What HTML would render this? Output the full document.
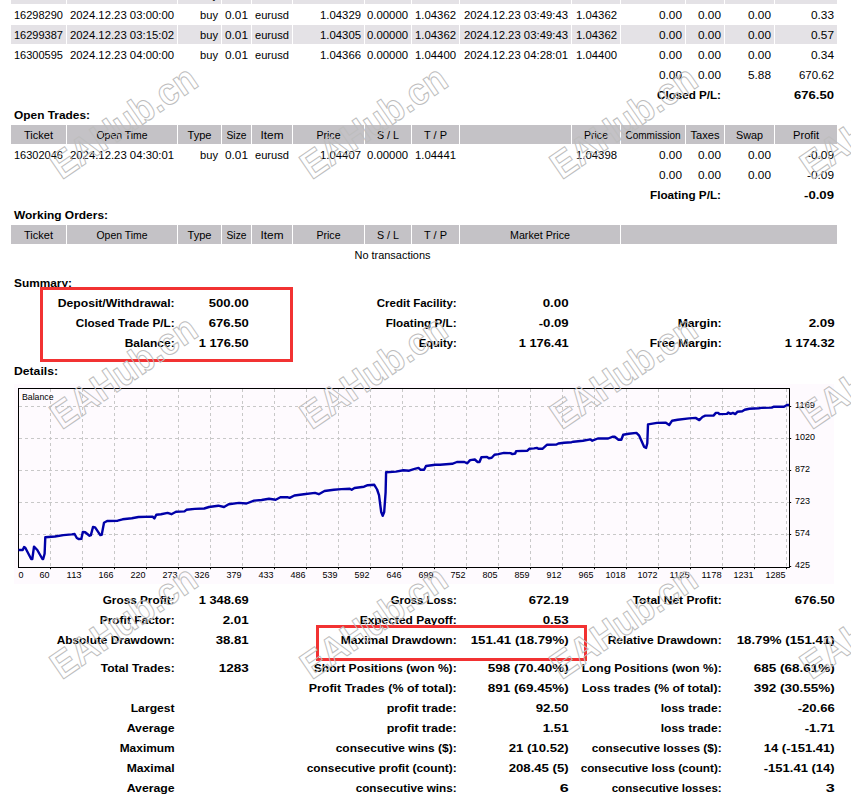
<!DOCTYPE html>
<html><head><meta charset="utf-8"><title>Statement</title>
<style>
html,body{margin:0;padding:0;background:#fff;width:851px;height:798px;overflow:hidden}
svg{display:block}
text{font-family:"Liberation Sans",sans-serif;fill:#000}
.wm{fill:none;stroke:#BDBDBD;stroke-width:1}
</style></head><body>
<svg width="851" height="798" viewBox="0 0 851 798">
<rect x="0" y="0" width="851" height="798" fill="#fff"/>
<rect x="11" y="-15" width="55" height="19" fill="#E4E2E6"/>
<rect x="67" y="-15" width="110" height="19" fill="#E4E2E6"/>
<rect x="178" y="-15" width="43" height="19" fill="#E4E2E6"/>
<rect x="222" y="-15" width="29" height="19" fill="#E4E2E6"/>
<rect x="252" y="-15" width="40" height="19" fill="#E4E2E6"/>
<rect x="293" y="-15" width="71" height="19" fill="#E4E2E6"/>
<rect x="365" y="-15" width="46" height="19" fill="#E4E2E6"/>
<rect x="412" y="-15" width="47" height="19" fill="#E4E2E6"/>
<rect x="460" y="-15" width="111" height="19" fill="#E4E2E6"/>
<rect x="572" y="-15" width="48" height="19" fill="#E4E2E6"/>
<rect x="621" y="-15" width="64" height="19" fill="#E4E2E6"/>
<rect x="686" y="-15" width="38" height="19" fill="#E4E2E6"/>
<rect x="725" y="-15" width="49" height="19" fill="#E4E2E6"/>
<rect x="775" y="-15" width="62" height="19" fill="#E4E2E6"/>
<rect x="11" y="25" width="55" height="19" fill="#E4E2E6"/>
<rect x="67" y="25" width="110" height="19" fill="#E4E2E6"/>
<rect x="178" y="25" width="43" height="19" fill="#E4E2E6"/>
<rect x="222" y="25" width="29" height="19" fill="#E4E2E6"/>
<rect x="252" y="25" width="40" height="19" fill="#E4E2E6"/>
<rect x="293" y="25" width="71" height="19" fill="#E4E2E6"/>
<rect x="365" y="25" width="46" height="19" fill="#E4E2E6"/>
<rect x="412" y="25" width="47" height="19" fill="#E4E2E6"/>
<rect x="460" y="25" width="111" height="19" fill="#E4E2E6"/>
<rect x="572" y="25" width="48" height="19" fill="#E4E2E6"/>
<rect x="621" y="25" width="64" height="19" fill="#E4E2E6"/>
<rect x="686" y="25" width="38" height="19" fill="#E4E2E6"/>
<rect x="725" y="25" width="49" height="19" fill="#E4E2E6"/>
<rect x="775" y="25" width="62" height="19" fill="#E4E2E6"/>
<rect x="11" y="125" width="55" height="19" fill="#C4C2C6"/>
<rect x="67" y="125" width="110" height="19" fill="#C4C2C6"/>
<rect x="178" y="125" width="43" height="19" fill="#C4C2C6"/>
<rect x="222" y="125" width="29" height="19" fill="#C4C2C6"/>
<rect x="252" y="125" width="40" height="19" fill="#C4C2C6"/>
<rect x="293" y="125" width="71" height="19" fill="#C4C2C6"/>
<rect x="365" y="125" width="46" height="19" fill="#C4C2C6"/>
<rect x="412" y="125" width="47" height="19" fill="#C4C2C6"/>
<rect x="460" y="125" width="111" height="19" fill="#C4C2C6"/>
<rect x="572" y="125" width="48" height="19" fill="#C4C2C6"/>
<rect x="621" y="125" width="64" height="19" fill="#C4C2C6"/>
<rect x="686" y="125" width="38" height="19" fill="#C4C2C6"/>
<rect x="725" y="125" width="49" height="19" fill="#C4C2C6"/>
<rect x="775" y="125" width="62" height="19" fill="#C4C2C6"/>
<rect x="11" y="225" width="55" height="19" fill="#C4C2C6"/>
<rect x="67" y="225" width="110" height="19" fill="#C4C2C6"/>
<rect x="178" y="225" width="43" height="19" fill="#C4C2C6"/>
<rect x="222" y="225" width="29" height="19" fill="#C4C2C6"/>
<rect x="252" y="225" width="40" height="19" fill="#C4C2C6"/>
<rect x="293" y="225" width="71" height="19" fill="#C4C2C6"/>
<rect x="365" y="225" width="46" height="19" fill="#C4C2C6"/>
<rect x="412" y="225" width="47" height="19" fill="#C4C2C6"/>
<rect x="460" y="225" width="160" height="19" fill="#C4C2C6"/>
<rect x="621" y="225" width="216" height="19" fill="#C4C2C6"/>
<text x="218" y="-1" text-anchor="end" font-size="11" textLength="18" lengthAdjust="spacingAndGlyphs">buy</text>
<text x="63" y="19" text-anchor="end" font-size="11" textLength="49" lengthAdjust="spacingAndGlyphs">16298290</text>
<text x="174" y="19" text-anchor="end" font-size="11" textLength="104" lengthAdjust="spacingAndGlyphs">2024.12.23 03:00:00</text>
<text x="218" y="19" text-anchor="end" font-size="11" textLength="18" lengthAdjust="spacingAndGlyphs">buy</text>
<text x="248" y="19" text-anchor="end" font-size="11" textLength="23" lengthAdjust="spacingAndGlyphs">0.01</text>
<text x="289" y="19" text-anchor="end" font-size="11" textLength="34" lengthAdjust="spacingAndGlyphs">eurusd</text>
<text x="361" y="19" text-anchor="end" font-size="11" textLength="41" lengthAdjust="spacingAndGlyphs">1.04329</text>
<text x="408" y="19" text-anchor="end" font-size="11" textLength="41" lengthAdjust="spacingAndGlyphs">0.00000</text>
<text x="456" y="19" text-anchor="end" font-size="11" textLength="41" lengthAdjust="spacingAndGlyphs">1.04362</text>
<text x="568" y="19" text-anchor="end" font-size="11" textLength="104" lengthAdjust="spacingAndGlyphs">2024.12.23 03:49:43</text>
<text x="617" y="19" text-anchor="end" font-size="11" textLength="41" lengthAdjust="spacingAndGlyphs">1.04362</text>
<text x="682" y="19" text-anchor="end" font-size="11" textLength="23" lengthAdjust="spacingAndGlyphs">0.00</text>
<text x="721" y="19" text-anchor="end" font-size="11" textLength="23" lengthAdjust="spacingAndGlyphs">0.00</text>
<text x="771" y="19" text-anchor="end" font-size="11" textLength="23" lengthAdjust="spacingAndGlyphs">0.00</text>
<text x="834" y="19" text-anchor="end" font-size="11" textLength="23" lengthAdjust="spacingAndGlyphs">0.33</text>
<text x="63" y="39" text-anchor="end" font-size="11" textLength="49" lengthAdjust="spacingAndGlyphs">16299387</text>
<text x="174" y="39" text-anchor="end" font-size="11" textLength="104" lengthAdjust="spacingAndGlyphs">2024.12.23 03:15:02</text>
<text x="218" y="39" text-anchor="end" font-size="11" textLength="18" lengthAdjust="spacingAndGlyphs">buy</text>
<text x="248" y="39" text-anchor="end" font-size="11" textLength="23" lengthAdjust="spacingAndGlyphs">0.01</text>
<text x="289" y="39" text-anchor="end" font-size="11" textLength="34" lengthAdjust="spacingAndGlyphs">eurusd</text>
<text x="361" y="39" text-anchor="end" font-size="11" textLength="41" lengthAdjust="spacingAndGlyphs">1.04305</text>
<text x="408" y="39" text-anchor="end" font-size="11" textLength="41" lengthAdjust="spacingAndGlyphs">0.00000</text>
<text x="456" y="39" text-anchor="end" font-size="11" textLength="41" lengthAdjust="spacingAndGlyphs">1.04362</text>
<text x="568" y="39" text-anchor="end" font-size="11" textLength="104" lengthAdjust="spacingAndGlyphs">2024.12.23 03:49:43</text>
<text x="617" y="39" text-anchor="end" font-size="11" textLength="41" lengthAdjust="spacingAndGlyphs">1.04362</text>
<text x="682" y="39" text-anchor="end" font-size="11" textLength="23" lengthAdjust="spacingAndGlyphs">0.00</text>
<text x="721" y="39" text-anchor="end" font-size="11" textLength="23" lengthAdjust="spacingAndGlyphs">0.00</text>
<text x="771" y="39" text-anchor="end" font-size="11" textLength="23" lengthAdjust="spacingAndGlyphs">0.00</text>
<text x="834" y="39" text-anchor="end" font-size="11" textLength="23" lengthAdjust="spacingAndGlyphs">0.57</text>
<text x="63" y="59" text-anchor="end" font-size="11" textLength="49" lengthAdjust="spacingAndGlyphs">16300595</text>
<text x="174" y="59" text-anchor="end" font-size="11" textLength="104" lengthAdjust="spacingAndGlyphs">2024.12.23 04:00:00</text>
<text x="218" y="59" text-anchor="end" font-size="11" textLength="18" lengthAdjust="spacingAndGlyphs">buy</text>
<text x="248" y="59" text-anchor="end" font-size="11" textLength="23" lengthAdjust="spacingAndGlyphs">0.01</text>
<text x="289" y="59" text-anchor="end" font-size="11" textLength="34" lengthAdjust="spacingAndGlyphs">eurusd</text>
<text x="361" y="59" text-anchor="end" font-size="11" textLength="41" lengthAdjust="spacingAndGlyphs">1.04366</text>
<text x="408" y="59" text-anchor="end" font-size="11" textLength="41" lengthAdjust="spacingAndGlyphs">0.00000</text>
<text x="456" y="59" text-anchor="end" font-size="11" textLength="41" lengthAdjust="spacingAndGlyphs">1.04400</text>
<text x="568" y="59" text-anchor="end" font-size="11" textLength="104" lengthAdjust="spacingAndGlyphs">2024.12.23 04:28:01</text>
<text x="617" y="59" text-anchor="end" font-size="11" textLength="41" lengthAdjust="spacingAndGlyphs">1.04400</text>
<text x="682" y="59" text-anchor="end" font-size="11" textLength="23" lengthAdjust="spacingAndGlyphs">0.00</text>
<text x="721" y="59" text-anchor="end" font-size="11" textLength="23" lengthAdjust="spacingAndGlyphs">0.00</text>
<text x="771" y="59" text-anchor="end" font-size="11" textLength="23" lengthAdjust="spacingAndGlyphs">0.00</text>
<text x="834" y="59" text-anchor="end" font-size="11" textLength="23" lengthAdjust="spacingAndGlyphs">0.34</text>
<text x="682" y="79" text-anchor="end" font-size="11" textLength="23" lengthAdjust="spacingAndGlyphs">0.00</text>
<text x="721" y="79" text-anchor="end" font-size="11" textLength="23" lengthAdjust="spacingAndGlyphs">0.00</text>
<text x="771" y="79" text-anchor="end" font-size="11" textLength="23" lengthAdjust="spacingAndGlyphs">5.88</text>
<text x="834" y="79" text-anchor="end" font-size="11" textLength="35" lengthAdjust="spacingAndGlyphs">670.62</text>
<text x="721" y="99" text-anchor="end" font-weight="bold" font-size="11" textLength="64" lengthAdjust="spacingAndGlyphs">Closed P/L:</text>
<text x="834" y="99" text-anchor="end" font-weight="bold" font-size="11" textLength="40" lengthAdjust="spacingAndGlyphs">676.50</text>
<text x="14" y="119" text-anchor="start" font-weight="bold" font-size="11" textLength="76" lengthAdjust="spacingAndGlyphs">Open Trades:</text>
<text x="38.5" y="139" text-anchor="middle" font-size="11" textLength="29" lengthAdjust="spacingAndGlyphs">Ticket</text>
<text x="122.0" y="139" text-anchor="middle" font-size="11" textLength="51" lengthAdjust="spacingAndGlyphs">Open Time</text>
<text x="199.5" y="139" text-anchor="middle" font-size="11" textLength="24" lengthAdjust="spacingAndGlyphs">Type</text>
<text x="236.5" y="139" text-anchor="middle" font-size="11" textLength="20" lengthAdjust="spacingAndGlyphs">Size</text>
<text x="272.0" y="139" text-anchor="middle" font-size="11" textLength="23" lengthAdjust="spacingAndGlyphs">Item</text>
<text x="328.5" y="139" text-anchor="middle" font-size="11" textLength="24" lengthAdjust="spacingAndGlyphs">Price</text>
<text x="388.0" y="139" text-anchor="middle" font-size="11" textLength="22" lengthAdjust="spacingAndGlyphs">S / L</text>
<text x="435.5" y="139" text-anchor="middle" font-size="11" textLength="23" lengthAdjust="spacingAndGlyphs">T / P</text>
<text x="596.0" y="139" text-anchor="middle" font-size="11" textLength="24" lengthAdjust="spacingAndGlyphs">Price</text>
<text x="653.0" y="139" text-anchor="middle" font-size="11" textLength="55" lengthAdjust="spacingAndGlyphs">Commission</text>
<text x="705.0" y="139" text-anchor="middle" font-size="11" textLength="29" lengthAdjust="spacingAndGlyphs">Taxes</text>
<text x="749.5" y="139" text-anchor="middle" font-size="11" textLength="27" lengthAdjust="spacingAndGlyphs">Swap</text>
<text x="806.0" y="139" text-anchor="middle" font-size="11" textLength="26" lengthAdjust="spacingAndGlyphs">Profit</text>
<text x="63" y="159" text-anchor="end" font-size="11" textLength="49" lengthAdjust="spacingAndGlyphs">16302046</text>
<text x="174" y="159" text-anchor="end" font-size="11" textLength="104" lengthAdjust="spacingAndGlyphs">2024.12.23 04:30:01</text>
<text x="218" y="159" text-anchor="end" font-size="11" textLength="18" lengthAdjust="spacingAndGlyphs">buy</text>
<text x="248" y="159" text-anchor="end" font-size="11" textLength="23" lengthAdjust="spacingAndGlyphs">0.01</text>
<text x="289" y="159" text-anchor="end" font-size="11" textLength="34" lengthAdjust="spacingAndGlyphs">eurusd</text>
<text x="361" y="159" text-anchor="end" font-size="11" textLength="41" lengthAdjust="spacingAndGlyphs">1.04407</text>
<text x="408" y="159" text-anchor="end" font-size="11" textLength="41" lengthAdjust="spacingAndGlyphs">0.00000</text>
<text x="456" y="159" text-anchor="end" font-size="11" textLength="41" lengthAdjust="spacingAndGlyphs">1.04441</text>
<text x="617" y="159" text-anchor="end" font-size="11" textLength="41" lengthAdjust="spacingAndGlyphs">1.04398</text>
<text x="682" y="159" text-anchor="end" font-size="11" textLength="23" lengthAdjust="spacingAndGlyphs">0.00</text>
<text x="721" y="159" text-anchor="end" font-size="11" textLength="23" lengthAdjust="spacingAndGlyphs">0.00</text>
<text x="771" y="159" text-anchor="end" font-size="11" textLength="23" lengthAdjust="spacingAndGlyphs">0.00</text>
<text x="834" y="159" text-anchor="end" font-size="11" textLength="27" lengthAdjust="spacingAndGlyphs">-0.09</text>
<text x="682" y="179" text-anchor="end" font-size="11" textLength="23" lengthAdjust="spacingAndGlyphs">0.00</text>
<text x="721" y="179" text-anchor="end" font-size="11" textLength="23" lengthAdjust="spacingAndGlyphs">0.00</text>
<text x="771" y="179" text-anchor="end" font-size="11" textLength="23" lengthAdjust="spacingAndGlyphs">0.00</text>
<text x="834" y="179" text-anchor="end" font-size="11" textLength="27" lengthAdjust="spacingAndGlyphs">-0.09</text>
<text x="721" y="199" text-anchor="end" font-weight="bold" font-size="11" textLength="71" lengthAdjust="spacingAndGlyphs">Floating P/L:</text>
<text x="834" y="199" text-anchor="end" font-weight="bold" font-size="11" textLength="30" lengthAdjust="spacingAndGlyphs">-0.09</text>
<text x="14" y="219" text-anchor="start" font-weight="bold" font-size="11" textLength="94" lengthAdjust="spacingAndGlyphs">Working Orders:</text>
<text x="38.5" y="239" text-anchor="middle" font-size="11" textLength="29" lengthAdjust="spacingAndGlyphs">Ticket</text>
<text x="122.0" y="239" text-anchor="middle" font-size="11" textLength="51" lengthAdjust="spacingAndGlyphs">Open Time</text>
<text x="199.5" y="239" text-anchor="middle" font-size="11" textLength="24" lengthAdjust="spacingAndGlyphs">Type</text>
<text x="236.5" y="239" text-anchor="middle" font-size="11" textLength="20" lengthAdjust="spacingAndGlyphs">Size</text>
<text x="272.0" y="239" text-anchor="middle" font-size="11" textLength="23" lengthAdjust="spacingAndGlyphs">Item</text>
<text x="328.5" y="239" text-anchor="middle" font-size="11" textLength="24" lengthAdjust="spacingAndGlyphs">Price</text>
<text x="388.0" y="239" text-anchor="middle" font-size="11" textLength="22" lengthAdjust="spacingAndGlyphs">S / L</text>
<text x="435.5" y="239" text-anchor="middle" font-size="11" textLength="23" lengthAdjust="spacingAndGlyphs">T / P</text>
<text x="540" y="239" text-anchor="middle" font-size="11" textLength="60" lengthAdjust="spacingAndGlyphs">Market Price</text>
<text x="392.5" y="259" text-anchor="middle" font-size="11" textLength="76" lengthAdjust="spacingAndGlyphs">No transactions</text>
<text x="14" y="287" text-anchor="start" font-weight="bold" font-size="11" textLength="58" lengthAdjust="spacingAndGlyphs">Summary:</text>
<text x="174.7" y="307" text-anchor="end" font-weight="bold" font-size="11" textLength="117" lengthAdjust="spacingAndGlyphs">Deposit/Withdrawal:</text>
<text x="248.7" y="307" text-anchor="end" font-weight="bold" font-size="11" textLength="40" lengthAdjust="spacingAndGlyphs">500.00</text>
<text x="456.7" y="307" text-anchor="end" font-weight="bold" font-size="11" textLength="80" lengthAdjust="spacingAndGlyphs">Credit Facility:</text>
<text x="568.7" y="307" text-anchor="end" font-weight="bold" font-size="11" textLength="26" lengthAdjust="spacingAndGlyphs">0.00</text>
<text x="174.7" y="327" text-anchor="end" font-weight="bold" font-size="11" textLength="99" lengthAdjust="spacingAndGlyphs">Closed Trade P/L:</text>
<text x="248.7" y="327" text-anchor="end" font-weight="bold" font-size="11" textLength="40" lengthAdjust="spacingAndGlyphs">676.50</text>
<text x="456.7" y="327" text-anchor="end" font-weight="bold" font-size="11" textLength="71" lengthAdjust="spacingAndGlyphs">Floating P/L:</text>
<text x="568.7" y="327" text-anchor="end" font-weight="bold" font-size="11" textLength="30" lengthAdjust="spacingAndGlyphs">-0.09</text>
<text x="721.7" y="327" text-anchor="end" font-weight="bold" font-size="11" textLength="44" lengthAdjust="spacingAndGlyphs">Margin:</text>
<text x="834.7" y="327" text-anchor="end" font-weight="bold" font-size="11" textLength="26" lengthAdjust="spacingAndGlyphs">2.09</text>
<text x="174.7" y="347" text-anchor="end" font-weight="bold" font-size="11" textLength="50" lengthAdjust="spacingAndGlyphs">Balance:</text>
<text x="248.7" y="347" text-anchor="end" font-weight="bold" font-size="11" textLength="50" lengthAdjust="spacingAndGlyphs">1 176.50</text>
<text x="456.7" y="347" text-anchor="end" font-weight="bold" font-size="11" textLength="38" lengthAdjust="spacingAndGlyphs">Equity:</text>
<text x="568.7" y="347" text-anchor="end" font-weight="bold" font-size="11" textLength="50" lengthAdjust="spacingAndGlyphs">1 176.41</text>
<text x="721.7" y="347" text-anchor="end" font-weight="bold" font-size="11" textLength="72" lengthAdjust="spacingAndGlyphs">Free Margin:</text>
<text x="834.7" y="347" text-anchor="end" font-weight="bold" font-size="11" textLength="50" lengthAdjust="spacingAndGlyphs">1 174.32</text>
<text x="14" y="375" text-anchor="start" font-weight="bold" font-size="11" textLength="44" lengthAdjust="spacingAndGlyphs">Details:</text>
<text x="174.7" y="604" text-anchor="end" font-weight="bold" font-size="11" textLength="72" lengthAdjust="spacingAndGlyphs">Gross Profit:</text>
<text x="248.7" y="604" text-anchor="end" font-weight="bold" font-size="11" textLength="50" lengthAdjust="spacingAndGlyphs">1 348.69</text>
<text x="456.7" y="604" text-anchor="end" font-weight="bold" font-size="11" textLength="66" lengthAdjust="spacingAndGlyphs">Gross Loss:</text>
<text x="568.7" y="604" text-anchor="end" font-weight="bold" font-size="11" textLength="40" lengthAdjust="spacingAndGlyphs">672.19</text>
<text x="721.7" y="604" text-anchor="end" font-weight="bold" font-size="11" textLength="89" lengthAdjust="spacingAndGlyphs">Total Net Profit:</text>
<text x="834.7" y="604" text-anchor="end" font-weight="bold" font-size="11" textLength="40" lengthAdjust="spacingAndGlyphs">676.50</text>
<text x="174.7" y="624" text-anchor="end" font-weight="bold" font-size="11" textLength="75" lengthAdjust="spacingAndGlyphs">Profit Factor:</text>
<text x="248.7" y="624" text-anchor="end" font-weight="bold" font-size="11" textLength="26" lengthAdjust="spacingAndGlyphs">2.01</text>
<text x="456.7" y="624" text-anchor="end" font-weight="bold" font-size="11" textLength="97" lengthAdjust="spacingAndGlyphs">Expected Payoff:</text>
<text x="568.7" y="624" text-anchor="end" font-weight="bold" font-size="11" textLength="26" lengthAdjust="spacingAndGlyphs">0.53</text>
<text x="174.7" y="644" text-anchor="end" font-weight="bold" font-size="11" textLength="118" lengthAdjust="spacingAndGlyphs">Absolute Drawdown:</text>
<text x="248.7" y="644" text-anchor="end" font-weight="bold" font-size="11" textLength="33" lengthAdjust="spacingAndGlyphs">38.81</text>
<text x="456.7" y="644" text-anchor="end" font-weight="bold" font-size="11" textLength="116" lengthAdjust="spacingAndGlyphs">Maximal Drawdown:</text>
<text x="568.7" y="644" text-anchor="end" font-weight="bold" font-size="11" textLength="98" lengthAdjust="spacingAndGlyphs">151.41 (18.79%)</text>
<text x="721.7" y="644" text-anchor="end" font-weight="bold" font-size="11" textLength="114" lengthAdjust="spacingAndGlyphs">Relative Drawdown:</text>
<text x="834.7" y="644" text-anchor="end" font-weight="bold" font-size="11" textLength="98" lengthAdjust="spacingAndGlyphs">18.79% (151.41)</text>
<text x="174.7" y="672" text-anchor="end" font-weight="bold" font-size="11" textLength="74" lengthAdjust="spacingAndGlyphs">Total Trades:</text>
<text x="248.7" y="672" text-anchor="end" font-weight="bold" font-size="11" textLength="30" lengthAdjust="spacingAndGlyphs">1283</text>
<text x="456.7" y="672" text-anchor="end" font-weight="bold" font-size="11" textLength="143" lengthAdjust="spacingAndGlyphs">Short Positions (won %):</text>
<text x="568.7" y="672" text-anchor="end" font-weight="bold" font-size="11" textLength="81" lengthAdjust="spacingAndGlyphs">598 (70.40%)</text>
<text x="721.7" y="672" text-anchor="end" font-weight="bold" font-size="11" textLength="140" lengthAdjust="spacingAndGlyphs">Long Positions (won %):</text>
<text x="834.7" y="672" text-anchor="end" font-weight="bold" font-size="11" textLength="81" lengthAdjust="spacingAndGlyphs">685 (68.61%)</text>
<text x="456.7" y="692" text-anchor="end" font-weight="bold" font-size="11" textLength="148" lengthAdjust="spacingAndGlyphs">Profit Trades (% of total):</text>
<text x="568.7" y="692" text-anchor="end" font-weight="bold" font-size="11" textLength="81" lengthAdjust="spacingAndGlyphs">891 (69.45%)</text>
<text x="721.7" y="692" text-anchor="end" font-weight="bold" font-size="11" textLength="140" lengthAdjust="spacingAndGlyphs">Loss trades (% of total):</text>
<text x="834.7" y="692" text-anchor="end" font-weight="bold" font-size="11" textLength="81" lengthAdjust="spacingAndGlyphs">392 (30.55%)</text>
<text x="174.7" y="712" text-anchor="end" font-weight="bold" font-size="11" textLength="44" lengthAdjust="spacingAndGlyphs">Largest</text>
<text x="456.7" y="712" text-anchor="end" font-weight="bold" font-size="11" textLength="70" lengthAdjust="spacingAndGlyphs">profit trade:</text>
<text x="568.7" y="712" text-anchor="end" font-weight="bold" font-size="11" textLength="33" lengthAdjust="spacingAndGlyphs">92.50</text>
<text x="721.7" y="712" text-anchor="end" font-weight="bold" font-size="11" textLength="61" lengthAdjust="spacingAndGlyphs">loss trade:</text>
<text x="834.7" y="712" text-anchor="end" font-weight="bold" font-size="11" textLength="37" lengthAdjust="spacingAndGlyphs">-20.66</text>
<text x="174.7" y="732" text-anchor="end" font-weight="bold" font-size="11" textLength="48" lengthAdjust="spacingAndGlyphs">Average</text>
<text x="456.7" y="732" text-anchor="end" font-weight="bold" font-size="11" textLength="70" lengthAdjust="spacingAndGlyphs">profit trade:</text>
<text x="568.7" y="732" text-anchor="end" font-weight="bold" font-size="11" textLength="26" lengthAdjust="spacingAndGlyphs">1.51</text>
<text x="721.7" y="732" text-anchor="end" font-weight="bold" font-size="11" textLength="61" lengthAdjust="spacingAndGlyphs">loss trade:</text>
<text x="834.7" y="732" text-anchor="end" font-weight="bold" font-size="11" textLength="30" lengthAdjust="spacingAndGlyphs">-1.71</text>
<text x="174.7" y="752" text-anchor="end" font-weight="bold" font-size="11" textLength="55" lengthAdjust="spacingAndGlyphs">Maximum</text>
<text x="456.7" y="752" text-anchor="end" font-weight="bold" font-size="11" textLength="121" lengthAdjust="spacingAndGlyphs">consecutive wins ($):</text>
<text x="568.7" y="752" text-anchor="end" font-weight="bold" font-size="11" textLength="60" lengthAdjust="spacingAndGlyphs">21 (10.52)</text>
<text x="721.7" y="752" text-anchor="end" font-weight="bold" font-size="11" textLength="130" lengthAdjust="spacingAndGlyphs">consecutive losses ($):</text>
<text x="834.7" y="752" text-anchor="end" font-weight="bold" font-size="11" textLength="71" lengthAdjust="spacingAndGlyphs">14 (-151.41)</text>
<text x="174.7" y="772" text-anchor="end" font-weight="bold" font-size="11" textLength="48" lengthAdjust="spacingAndGlyphs">Maximal</text>
<text x="456.7" y="772" text-anchor="end" font-weight="bold" font-size="11" textLength="150" lengthAdjust="spacingAndGlyphs">consecutive profit (count):</text>
<text x="568.7" y="772" text-anchor="end" font-weight="bold" font-size="11" textLength="60" lengthAdjust="spacingAndGlyphs">208.45 (5)</text>
<text x="721.7" y="772" text-anchor="end" font-weight="bold" font-size="11" textLength="141" lengthAdjust="spacingAndGlyphs">consecutive loss (count):</text>
<text x="834.7" y="772" text-anchor="end" font-weight="bold" font-size="11" textLength="71" lengthAdjust="spacingAndGlyphs">-151.41 (14)</text>
<text x="174.7" y="792" text-anchor="end" font-weight="bold" font-size="11" textLength="48" lengthAdjust="spacingAndGlyphs">Average</text>
<text x="456.7" y="792" text-anchor="end" font-weight="bold" font-size="11" textLength="101" lengthAdjust="spacingAndGlyphs">consecutive wins:</text>
<text x="568.7" y="792" text-anchor="end" font-weight="bold" font-size="11" textLength="9" lengthAdjust="spacingAndGlyphs">6</text>
<text x="721.7" y="792" text-anchor="end" font-weight="bold" font-size="11" textLength="110" lengthAdjust="spacingAndGlyphs">consecutive losses:</text>
<text x="834.7" y="792" text-anchor="end" font-weight="bold" font-size="11" textLength="9" lengthAdjust="spacingAndGlyphs">3</text>
<rect x="41.5" y="288.5" width="250" height="72" fill="none" stroke="#F23232" stroke-width="3"/>
<rect x="317.5" y="626.5" width="268" height="33" fill="none" stroke="#F23232" stroke-width="3"/>
<rect x="14" y="384" width="820" height="200" fill="#FEFAFE"/>
<line x1="50.5" y1="389" x2="50.5" y2="567" stroke="#C8C8C8" stroke-width="1" stroke-dasharray="3 3"/>
<line x1="82.5" y1="389" x2="82.5" y2="567" stroke="#C8C8C8" stroke-width="1" stroke-dasharray="3 3"/>
<line x1="114.5" y1="389" x2="114.5" y2="567" stroke="#C8C8C8" stroke-width="1" stroke-dasharray="3 3"/>
<line x1="146.5" y1="389" x2="146.5" y2="567" stroke="#C8C8C8" stroke-width="1" stroke-dasharray="3 3"/>
<line x1="178.5" y1="389" x2="178.5" y2="567" stroke="#C8C8C8" stroke-width="1" stroke-dasharray="3 3"/>
<line x1="210.5" y1="389" x2="210.5" y2="567" stroke="#C8C8C8" stroke-width="1" stroke-dasharray="3 3"/>
<line x1="242.5" y1="389" x2="242.5" y2="567" stroke="#C8C8C8" stroke-width="1" stroke-dasharray="3 3"/>
<line x1="274.5" y1="389" x2="274.5" y2="567" stroke="#C8C8C8" stroke-width="1" stroke-dasharray="3 3"/>
<line x1="306.5" y1="389" x2="306.5" y2="567" stroke="#C8C8C8" stroke-width="1" stroke-dasharray="3 3"/>
<line x1="338.5" y1="389" x2="338.5" y2="567" stroke="#C8C8C8" stroke-width="1" stroke-dasharray="3 3"/>
<line x1="370.5" y1="389" x2="370.5" y2="567" stroke="#C8C8C8" stroke-width="1" stroke-dasharray="3 3"/>
<line x1="402.5" y1="389" x2="402.5" y2="567" stroke="#C8C8C8" stroke-width="1" stroke-dasharray="3 3"/>
<line x1="434.5" y1="389" x2="434.5" y2="567" stroke="#C8C8C8" stroke-width="1" stroke-dasharray="3 3"/>
<line x1="466.5" y1="389" x2="466.5" y2="567" stroke="#C8C8C8" stroke-width="1" stroke-dasharray="3 3"/>
<line x1="498.5" y1="389" x2="498.5" y2="567" stroke="#C8C8C8" stroke-width="1" stroke-dasharray="3 3"/>
<line x1="530.5" y1="389" x2="530.5" y2="567" stroke="#C8C8C8" stroke-width="1" stroke-dasharray="3 3"/>
<line x1="562.5" y1="389" x2="562.5" y2="567" stroke="#C8C8C8" stroke-width="1" stroke-dasharray="3 3"/>
<line x1="594.5" y1="389" x2="594.5" y2="567" stroke="#C8C8C8" stroke-width="1" stroke-dasharray="3 3"/>
<line x1="626.5" y1="389" x2="626.5" y2="567" stroke="#C8C8C8" stroke-width="1" stroke-dasharray="3 3"/>
<line x1="658.5" y1="389" x2="658.5" y2="567" stroke="#C8C8C8" stroke-width="1" stroke-dasharray="3 3"/>
<line x1="690.5" y1="389" x2="690.5" y2="567" stroke="#C8C8C8" stroke-width="1" stroke-dasharray="3 3"/>
<line x1="722.5" y1="389" x2="722.5" y2="567" stroke="#C8C8C8" stroke-width="1" stroke-dasharray="3 3"/>
<line x1="754.5" y1="389" x2="754.5" y2="567" stroke="#C8C8C8" stroke-width="1" stroke-dasharray="3 3"/>
<line x1="786.5" y1="389" x2="786.5" y2="567" stroke="#C8C8C8" stroke-width="1" stroke-dasharray="3 3"/>
<line x1="19" y1="406.5" x2="789" y2="406.5" stroke="#C8C8C8" stroke-width="1" stroke-dasharray="3 3"/>
<line x1="19" y1="438.5" x2="789" y2="438.5" stroke="#C8C8C8" stroke-width="1" stroke-dasharray="3 3"/>
<line x1="19" y1="470.5" x2="789" y2="470.5" stroke="#C8C8C8" stroke-width="1" stroke-dasharray="3 3"/>
<line x1="19" y1="502.5" x2="789" y2="502.5" stroke="#C8C8C8" stroke-width="1" stroke-dasharray="3 3"/>
<line x1="19" y1="534.5" x2="789" y2="534.5" stroke="#C8C8C8" stroke-width="1" stroke-dasharray="3 3"/>
<rect x="18.5" y="388.5" width="771" height="179" fill="none" stroke="#000" stroke-width="1"/>
<line x1="50.5" y1="568" x2="50.5" y2="569.2" stroke="#000" stroke-width="1"/>
<line x1="82.5" y1="568" x2="82.5" y2="569.2" stroke="#000" stroke-width="1"/>
<line x1="114.5" y1="568" x2="114.5" y2="569.2" stroke="#000" stroke-width="1"/>
<line x1="146.5" y1="568" x2="146.5" y2="569.2" stroke="#000" stroke-width="1"/>
<line x1="178.5" y1="568" x2="178.5" y2="569.2" stroke="#000" stroke-width="1"/>
<line x1="210.5" y1="568" x2="210.5" y2="569.2" stroke="#000" stroke-width="1"/>
<line x1="242.5" y1="568" x2="242.5" y2="569.2" stroke="#000" stroke-width="1"/>
<line x1="274.5" y1="568" x2="274.5" y2="569.2" stroke="#000" stroke-width="1"/>
<line x1="306.5" y1="568" x2="306.5" y2="569.2" stroke="#000" stroke-width="1"/>
<line x1="338.5" y1="568" x2="338.5" y2="569.2" stroke="#000" stroke-width="1"/>
<line x1="370.5" y1="568" x2="370.5" y2="569.2" stroke="#000" stroke-width="1"/>
<line x1="402.5" y1="568" x2="402.5" y2="569.2" stroke="#000" stroke-width="1"/>
<line x1="434.5" y1="568" x2="434.5" y2="569.2" stroke="#000" stroke-width="1"/>
<line x1="466.5" y1="568" x2="466.5" y2="569.2" stroke="#000" stroke-width="1"/>
<line x1="498.5" y1="568" x2="498.5" y2="569.2" stroke="#000" stroke-width="1"/>
<line x1="530.5" y1="568" x2="530.5" y2="569.2" stroke="#000" stroke-width="1"/>
<line x1="562.5" y1="568" x2="562.5" y2="569.2" stroke="#000" stroke-width="1"/>
<line x1="594.5" y1="568" x2="594.5" y2="569.2" stroke="#000" stroke-width="1"/>
<line x1="626.5" y1="568" x2="626.5" y2="569.2" stroke="#000" stroke-width="1"/>
<line x1="658.5" y1="568" x2="658.5" y2="569.2" stroke="#000" stroke-width="1"/>
<line x1="690.5" y1="568" x2="690.5" y2="569.2" stroke="#000" stroke-width="1"/>
<line x1="722.5" y1="568" x2="722.5" y2="569.2" stroke="#000" stroke-width="1"/>
<line x1="754.5" y1="568" x2="754.5" y2="569.2" stroke="#000" stroke-width="1"/>
<line x1="786.5" y1="568" x2="786.5" y2="569.2" stroke="#000" stroke-width="1"/>
<line x1="790" y1="406.5" x2="791.2" y2="406.5" stroke="#000" stroke-width="1"/>
<line x1="790" y1="438.5" x2="791.2" y2="438.5" stroke="#000" stroke-width="1"/>
<line x1="790" y1="470.5" x2="791.2" y2="470.5" stroke="#000" stroke-width="1"/>
<line x1="790" y1="502.5" x2="791.2" y2="502.5" stroke="#000" stroke-width="1"/>
<line x1="790" y1="534.5" x2="791.2" y2="534.5" stroke="#000" stroke-width="1"/>
<line x1="790" y1="566.5" x2="791.2" y2="566.5" stroke="#000" stroke-width="1"/>
<text x="22" y="400" text-anchor="start" font-size="9.8" textLength="31.5" lengthAdjust="spacingAndGlyphs">Balance</text>
<text x="18.5" y="578" text-anchor="start" font-size="9.8" textLength="5" lengthAdjust="spacingAndGlyphs">0</text>
<text x="49.6" y="578" text-anchor="end" font-size="9.8" textLength="10" lengthAdjust="spacingAndGlyphs">60</text>
<text x="81.6" y="578" text-anchor="end" font-size="9.8" textLength="15" lengthAdjust="spacingAndGlyphs">113</text>
<text x="113.6" y="578" text-anchor="end" font-size="9.8" textLength="15" lengthAdjust="spacingAndGlyphs">166</text>
<text x="145.6" y="578" text-anchor="end" font-size="9.8" textLength="15" lengthAdjust="spacingAndGlyphs">220</text>
<text x="177.6" y="578" text-anchor="end" font-size="9.8" textLength="15" lengthAdjust="spacingAndGlyphs">273</text>
<text x="209.6" y="578" text-anchor="end" font-size="9.8" textLength="15" lengthAdjust="spacingAndGlyphs">326</text>
<text x="241.6" y="578" text-anchor="end" font-size="9.8" textLength="15" lengthAdjust="spacingAndGlyphs">379</text>
<text x="273.6" y="578" text-anchor="end" font-size="9.8" textLength="15" lengthAdjust="spacingAndGlyphs">433</text>
<text x="305.6" y="578" text-anchor="end" font-size="9.8" textLength="15" lengthAdjust="spacingAndGlyphs">486</text>
<text x="337.6" y="578" text-anchor="end" font-size="9.8" textLength="15" lengthAdjust="spacingAndGlyphs">539</text>
<text x="369.6" y="578" text-anchor="end" font-size="9.8" textLength="15" lengthAdjust="spacingAndGlyphs">592</text>
<text x="401.6" y="578" text-anchor="end" font-size="9.8" textLength="15" lengthAdjust="spacingAndGlyphs">646</text>
<text x="433.6" y="578" text-anchor="end" font-size="9.8" textLength="15" lengthAdjust="spacingAndGlyphs">699</text>
<text x="465.6" y="578" text-anchor="end" font-size="9.8" textLength="15" lengthAdjust="spacingAndGlyphs">752</text>
<text x="497.6" y="578" text-anchor="end" font-size="9.8" textLength="15" lengthAdjust="spacingAndGlyphs">805</text>
<text x="529.6" y="578" text-anchor="end" font-size="9.8" textLength="15" lengthAdjust="spacingAndGlyphs">859</text>
<text x="561.6" y="578" text-anchor="end" font-size="9.8" textLength="15" lengthAdjust="spacingAndGlyphs">912</text>
<text x="593.6" y="578" text-anchor="end" font-size="9.8" textLength="15" lengthAdjust="spacingAndGlyphs">965</text>
<text x="625.6" y="578" text-anchor="end" font-size="9.8" textLength="20" lengthAdjust="spacingAndGlyphs">1018</text>
<text x="657.6" y="578" text-anchor="end" font-size="9.8" textLength="20" lengthAdjust="spacingAndGlyphs">1072</text>
<text x="689.6" y="578" text-anchor="end" font-size="9.8" textLength="20" lengthAdjust="spacingAndGlyphs">1125</text>
<text x="721.6" y="578" text-anchor="end" font-size="9.8" textLength="20" lengthAdjust="spacingAndGlyphs">1178</text>
<text x="753.6" y="578" text-anchor="end" font-size="9.8" textLength="20" lengthAdjust="spacingAndGlyphs">1231</text>
<text x="785.6" y="578" text-anchor="end" font-size="9.8" textLength="20" lengthAdjust="spacingAndGlyphs">1285</text>
<text x="795" y="408" text-anchor="start" font-size="9.8" textLength="20" lengthAdjust="spacingAndGlyphs">1169</text>
<text x="795" y="440" text-anchor="start" font-size="9.8" textLength="20" lengthAdjust="spacingAndGlyphs">1020</text>
<text x="795" y="472" text-anchor="start" font-size="9.8" textLength="15" lengthAdjust="spacingAndGlyphs">872</text>
<text x="795" y="504" text-anchor="start" font-size="9.8" textLength="15" lengthAdjust="spacingAndGlyphs">723</text>
<text x="795" y="536" text-anchor="start" font-size="9.8" textLength="15" lengthAdjust="spacingAndGlyphs">574</text>
<text x="795" y="568" text-anchor="start" font-size="9.8" textLength="15" lengthAdjust="spacingAndGlyphs">425</text>
<polyline points="18.5,550 22.7,550 24.1,547 25.3,547.8 31.2,559 32.3,559 34,546.7 37.3,550 42.4,559 43.2,559 44.6,553.8 45.3,537.2 54.9,536.5 63.4,535.1 71.8,534.4 74.6,534 76.8,538 78.9,539.1 81.4,538.7 82.8,532 85.2,532.3 89.5,535.8 90.9,535.1 93,527 95.1,527.4 100.3,535.1 101.7,534.9 104,522.7 107.1,521 117.7,520.7 122.6,519.3 131.8,518.2 138.5,517 152.6,516.6 154.4,518.5 156.3,514.7 161,514.2 167.6,512.9 171.4,514.2 176,511.7 184.5,511.4 186.4,509.8 194.8,508.9 204.2,508.5 209,507 218.3,505.7 224,507 228.7,504.2 239,502.9 246.5,503.5 254,500.6 261.6,500 269,498.8 275.7,499.7 280.4,497.3 287.9,497.3 289.7,497.9 294.4,495.5 303.8,494.2 315,492.9 318.8,494.2 324.5,491 333.9,489.8 341.4,489.1 349.8,488.7 351.7,489.8 354.5,488 364,486.7 367.7,485.2 374.3,484.8 377.1,489.5 379,495.1 381.2,512 382.7,515.8 384.2,512 385.6,492.3 386.1,472.2 395.9,471.6 403.4,470.3 409.1,470.7 414.7,468.8 418.5,467.9 420.3,469.7 424.1,469.7 426,466 435.4,464.7 440,464.8 452.2,463.8 456.9,462 464.4,462 467.3,463.3 470.1,460.1 474.8,459.5 477.6,462 479.5,462 481.4,457.3 487,456.9 488.9,458.2 491.7,457.8 494.5,454.8 498.3,454.1 503.9,452.9 510.5,453.1 512.4,454.1 515.2,453.5 516.1,451.1 527.4,450.7 529.3,448.8 534,448.4 536.8,447.9 538.7,448.8 542.4,448.8 547.1,444.7 556.5,444.5 558.4,443.5 564.1,442.8 571.6,442.2 573.5,441.7 582.9,440.7 590.4,439.4 592.3,440.7 597.8,438.5 608.2,438.5 612.9,436.7 614.7,436.7 618.5,439.8 621.3,439.8 623.2,434.8 628.8,433.8 636.4,432.9 639.2,435.7 644.2,447 646.1,447.9 647.3,443.2 648,424.4 657,422.9 665.5,422.6 669.2,425 672.1,420.7 677.7,419.7 689,418.4 695.6,417.9 699.3,420.1 702.4,417 705.3,415.6 713.5,415.6 715.9,412.9 718.2,412.9 719.4,414.1 727,413.9 728.2,412.6 730.6,413.9 732.9,412.9 735.3,414.1 737.6,411.7 742.3,411.2 744.7,409.7 749.4,408.8 758.8,408.2 761.1,407.9 771.7,407.6 774,406.7 784,406.7 787,405 789,405" fill="none" stroke="#0000A8" stroke-width="2.4" stroke-linejoin="round"/>
<text x="61.7" y="180.2" transform="rotate(-34.5 61.7 180.2)" font-size="38" font-weight="bold" textLength="168" lengthAdjust="spacingAndGlyphs" class="wm">EAHub.cn</text>
<text x="311.7" y="180.2" transform="rotate(-34.5 311.7 180.2)" font-size="38" font-weight="bold" textLength="168" lengthAdjust="spacingAndGlyphs" class="wm">EAHub.cn</text>
<text x="561.7" y="180.2" transform="rotate(-34.5 561.7 180.2)" font-size="38" font-weight="bold" textLength="168" lengthAdjust="spacingAndGlyphs" class="wm">EAHub.cn</text>
<text x="811.7" y="180.2" transform="rotate(-34.5 811.7 180.2)" font-size="38" font-weight="bold" textLength="168" lengthAdjust="spacingAndGlyphs" class="wm">EAHub.cn</text>
<text x="61.7" y="430.2" transform="rotate(-34.5 61.7 430.2)" font-size="38" font-weight="bold" textLength="168" lengthAdjust="spacingAndGlyphs" class="wm">EAHub.cn</text>
<text x="311.7" y="430.2" transform="rotate(-34.5 311.7 430.2)" font-size="38" font-weight="bold" textLength="168" lengthAdjust="spacingAndGlyphs" class="wm">EAHub.cn</text>
<text x="561.7" y="430.2" transform="rotate(-34.5 561.7 430.2)" font-size="38" font-weight="bold" textLength="168" lengthAdjust="spacingAndGlyphs" class="wm">EAHub.cn</text>
<text x="811.7" y="430.2" transform="rotate(-34.5 811.7 430.2)" font-size="38" font-weight="bold" textLength="168" lengthAdjust="spacingAndGlyphs" class="wm">EAHub.cn</text>
<text x="61.7" y="680.2" transform="rotate(-34.5 61.7 680.2)" font-size="38" font-weight="bold" textLength="168" lengthAdjust="spacingAndGlyphs" class="wm">EAHub.cn</text>
<text x="311.7" y="680.2" transform="rotate(-34.5 311.7 680.2)" font-size="38" font-weight="bold" textLength="168" lengthAdjust="spacingAndGlyphs" class="wm">EAHub.cn</text>
<text x="561.7" y="680.2" transform="rotate(-34.5 561.7 680.2)" font-size="38" font-weight="bold" textLength="168" lengthAdjust="spacingAndGlyphs" class="wm">EAHub.cn</text>
<text x="811.7" y="680.2" transform="rotate(-34.5 811.7 680.2)" font-size="38" font-weight="bold" textLength="168" lengthAdjust="spacingAndGlyphs" class="wm">EAHub.cn</text>
</svg>
</body></html>
